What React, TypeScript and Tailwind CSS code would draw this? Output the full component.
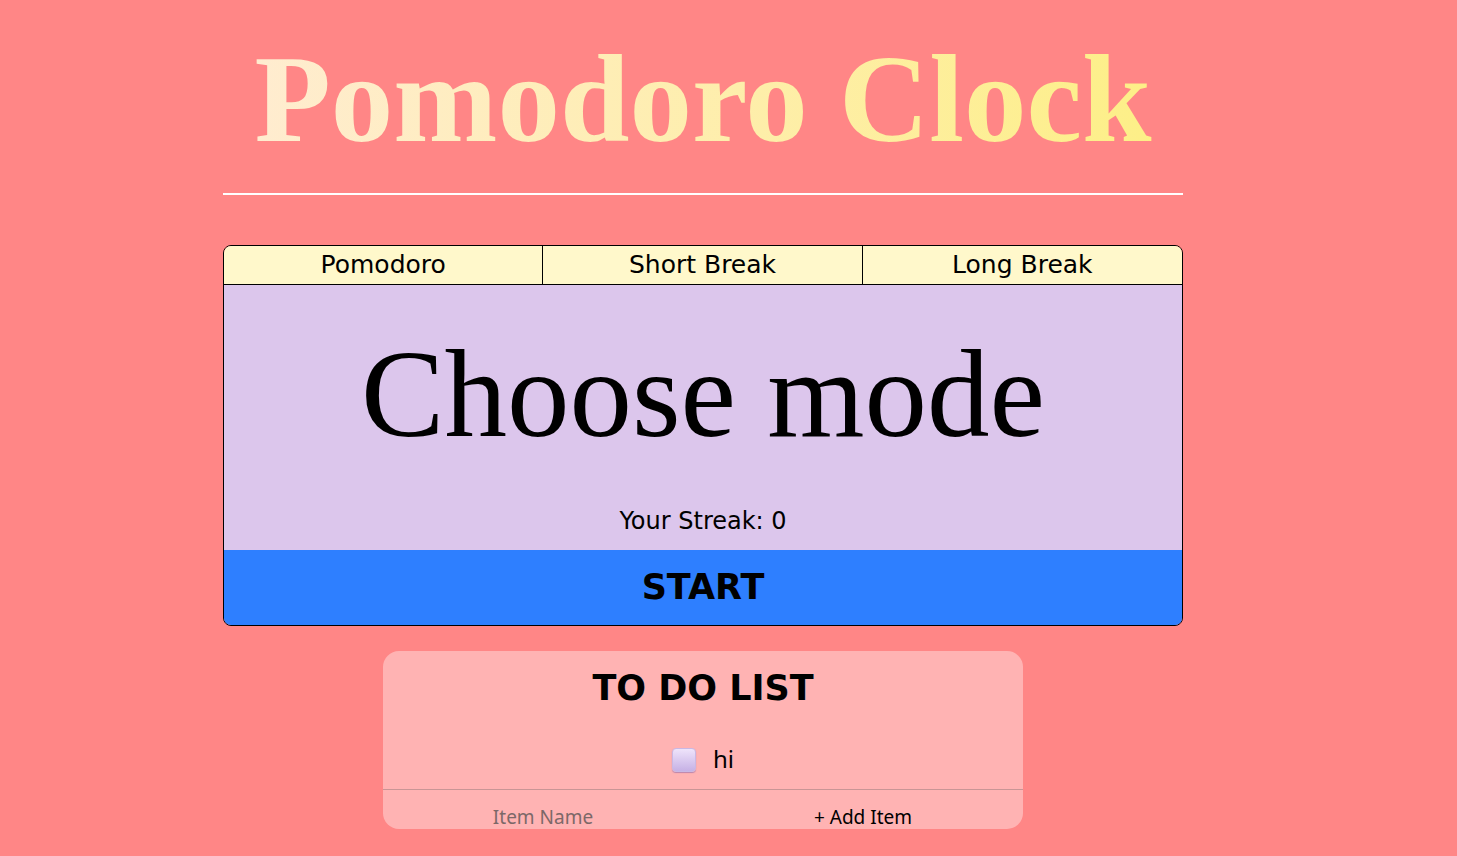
import { useState } from 'react';

const sans = "font-['DejaVu_Sans',sans-serif]";

export default function App() {
  const [done, setDone] = useState(false);
  const [item, setItem] = useState('');

  return (
    <div className="min-h-screen bg-[#ff8686] pl-[223px]">
      <div className="w-[960px] flex flex-col items-stretch">
        <h1 className="pt-[30px] text-center font-['Liberation_Serif',serif] text-[125px] font-bold leading-[138px] bg-gradient-to-r from-[#ffecd2] to-[#fdef84] bg-clip-text text-transparent">
          Pomodoro Clock
        </h1>
        <div className="mt-[25px] h-[2px] bg-white" />

        <div className="mt-[50px] border border-black rounded-lg overflow-hidden">
          <div className={`grid grid-cols-3 h-[39px] bg-[#fff8cb] border-b border-black text-[25px] text-black ${sans}`}>
            <button className="flex items-center justify-center border-r border-black">Pomodoro</button>
            <button className="flex items-center justify-center border-r border-black">Short Break</button>
            <button className="flex items-center justify-center">Long Break</button>
          </div>

          <div className="h-[265px] bg-[#dcc6ec] flex flex-col items-center">
            <div className="pt-[39px] font-['Liberation_Serif',serif] text-[125px] leading-[140px] text-black">
              Choose mode
            </div>
            <div className={`mt-auto pb-[14px] text-[24px] leading-[29px] text-black ${sans}`}>
              Your Streak: 0
            </div>
          </div>

          <button className={`w-full h-[75px] bg-[#2e7fff] flex items-center justify-center text-[35px] font-bold text-black ${sans}`}>
            START
          </button>
        </div>

        <div className="mt-[25px] mx-auto w-[640px] h-[178px] bg-[#ffb3b3] rounded-2xl flex flex-col">
          <h2 className={`pt-[16px] text-center text-[35px] font-bold leading-[42px] text-black ${sans}`}>
            TO DO LIST
          </h2>
          <label className="mt-[31px] h-[40px] flex items-center justify-center gap-[17px] font-['Noto_Sans',sans-serif] text-[24px] text-black">
            <span
              onClick={() => setDone(!done)}
              className="w-[24px] h-[24px] rounded-[4px] bg-gradient-to-b from-[#efe4fb] to-[#c6b1e5] border border-[#c9b8e4] shadow-[0_1px_1px_rgba(120,90,170,0.5)]"
            />
            <span className="leading-none pb-[2px]">hi</span>
          </label>
          <div className="mt-[9px] h-px bg-[#c99595]" />
          <div className="flex-1 grid grid-cols-2 items-end font-['Noto_Sans',sans-serif] text-[19px] leading-[24px]">
            <input
              value={item}
              onChange={(e) => setItem(e.target.value)}
              placeholder="Item Name"
              className="bg-transparent text-center outline-none placeholder:text-[#7c6868] text-black"
            />
            <button className="text-center text-black">+ Add Item</button>
          </div>
        </div>
      </div>
    </div>
  );
}
